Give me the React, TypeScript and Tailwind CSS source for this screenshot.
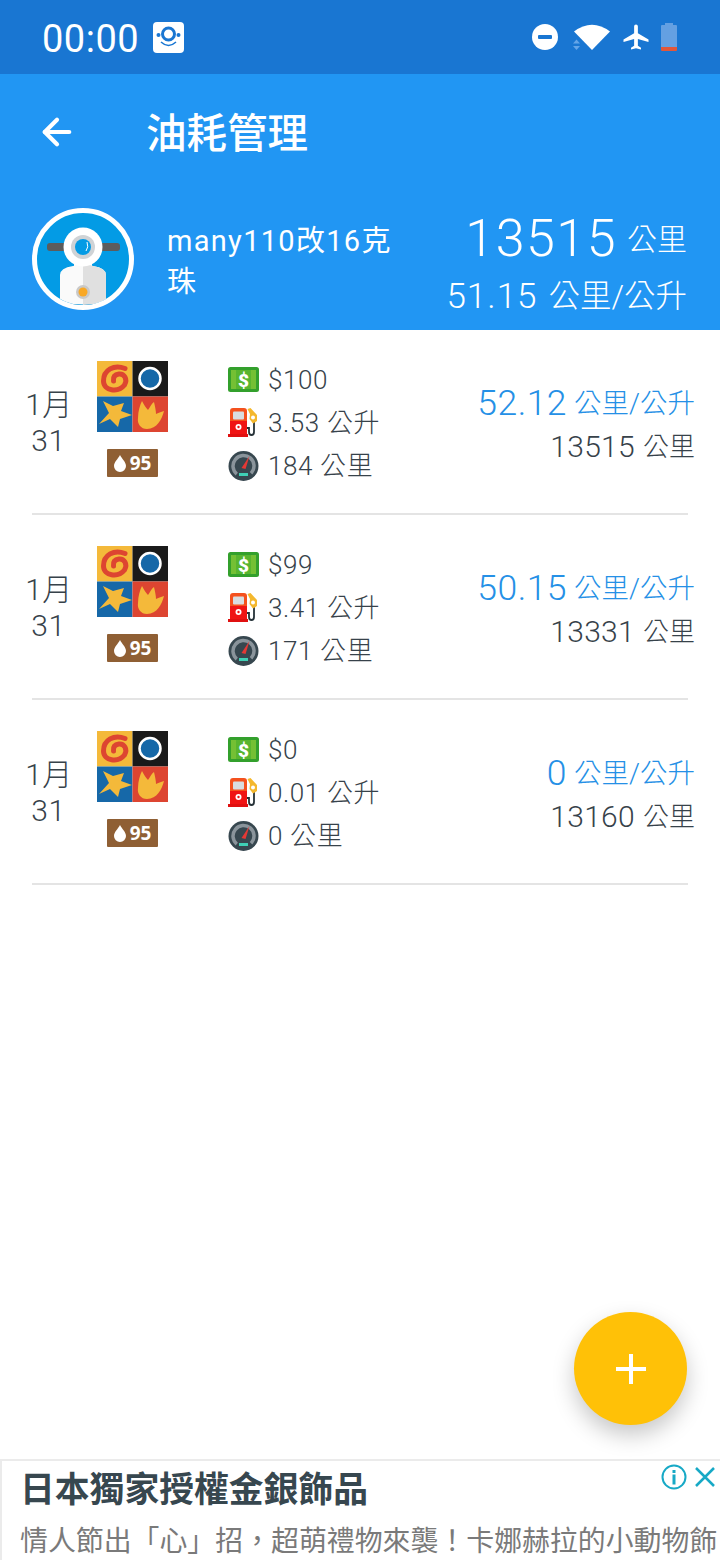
import { ArrowLeft } from 'lucide-react';

const FONT = '[font-family:Roboto,"Noto_Sans_CJK_TC",sans-serif]';

const records = [
  { money: '$100', litre: '3.53', dist: '184', rate: '52.12', odo: '13515' },
  { money: '$99', litre: '3.41', dist: '171', rate: '50.15', odo: '13331' },
  { money: '$0', litre: '0.01', dist: '0', rate: '0', odo: '13160' },
];

const StatusIcons = () => (
  <div className="flex items-center">
    <svg width="26" height="26" viewBox="0 0 26 26" className="mr-[15px]">
      <circle cx="13" cy="13" r="13" fill="#fff" />
      <rect x="6" y="11" width="14" height="4" rx="1" fill="#1976d2" />
    </svg>
    <svg width="38" height="28" viewBox="0 0 38 28" className="mr-[10px]">
      <path d="M1 8.500 Q19 -5 37 8.500 L19 27 Z" fill="#fff" />
      <path d="M0 20.500 L3.500 16.500 L7 20.500 Z M0 23 L7 23 L3.500 27 Z" fill="#64a5e8" />
    </svg>
    <svg width="30" height="30" viewBox="0 0 24 24" className="mr-[10px]">
      <path d="M22 16v-2l-8.500-5V3.500C13.500 2.670 12.830 2 12 2s-1.500.670-1.500 1.500V9L2 14v2l8.500-2.500V19L8 20.500V22l4-1 4 1v-1.500L13.500 19v-5.500L22 16z" fill="#fff" />
    </svg>
    <div className="flex h-[28px] w-[16px] flex-col">
      <div className="mx-auto h-[2px] w-[8px] bg-[#64a0e2]" />
      <div className="flex-1 rounded-t-[1px] bg-[#64a0e2]" />
      <div className="h-[4px] rounded-b-[1px] bg-[#e2573a]" />
    </div>
  </div>
);

const Scooter = () => (
  <div className="h-[102px] w-[102px] shrink-0 overflow-hidden rounded-full border-[5px] border-white bg-[#039be5]">
    <svg width="92" height="92" viewBox="0 0 92 92">
      <rect x="10" y="30" width="73" height="8" rx="3" fill="#5c5c5c" />
      <rect x="37" y="46" width="18" height="10" fill="#fafafa" />
      <path d="M23 89 V62 Q23 55 36 53 Q46 50 56 53 Q69 55 69 62 V89 Q46 94 23 89 Z" fill="#fafafa" />
      <path d="M46 51 Q52 51 56 53 Q69 55 69 62 V89 Q57 92 46 92 Z" fill="#e0e0e0" />
      <path d="M22 90 Q46 95 70 90" stroke="#0d7fb8" strokeWidth="1" fill="none" />
      <circle cx="46" cy="34" r="19.500" fill="#fff" />
      <circle cx="46" cy="34" r="12" fill="#cfd3d6" />
      <circle cx="46" cy="34" r="8" fill="#039be5" />
      <path d="M50 29 Q52 34 49 38" stroke="#fff" strokeWidth="1" fill="none" />
      <circle cx="46" cy="79" r="7" fill="#c9c9c9" />
      <circle cx="46" cy="79" r="4.500" fill="#f9a825" />
    </svg>
  </div>
);

const BrandLogo = () => (
  <svg width="71" height="71" viewBox="0 0 71 71">
    <rect width="35.500" height="35.500" fill="#f4b93a" />
    <rect x="35.500" width="35.500" height="35.500" fill="#1a1a1a" />
    <rect y="35.500" width="35.500" height="35.500" fill="#1668a8" />
    <rect x="35.500" y="35.500" width="35.500" height="35.500" fill="#dd4531" />
    <path d="M28 7.500 C17 3 6.500 9 6.500 20 C6.500 30 21 32 27.500 24 C31 18 27 12.500 22 13 C18 13.500 16 16 16.500 20" fill="none" stroke="#dd4531" strokeWidth="5" strokeLinecap="round" />
    <circle cx="53" cy="17.500" r="10.500" fill="#1668a8" stroke="#fff" strokeWidth="2.500" />
    <path d="M6 40 L16 45 L27 42 L24 50 L35 54 L23 58 L21 66 L13 58 L2 63 L12 52 Z" fill="#f4b93a" />
    <path d="M41 57 C41 50 43 44 45 40 C47 44 49 47 51 49 C53 46 55 42 57 41 C58 45 59 50 59 53 C61 52 64 51 67 50 C65 58 60 68 50 68 C44 68 40 63 41 57 Z" fill="#f4b93a" />
  </svg>
);

const OctaneBadge = () => (
  <div className="flex h-[28px] w-[51px] items-center justify-center gap-[4px] rounded-[1px] bg-[#8f5f34]">
    <svg width="12" height="17" viewBox="0 0 12 17">
      <path d="M6 0 C8 4 12 7 12 11 A6 6 0 0 1 0 11 C0 7 4 4 6 0 Z" fill="#fff" />
    </svg>
    <span className="text-[19px] leading-none font-bold text-white [font-family:'Open_Sans',sans-serif]">95</span>
  </div>
);

const MoneyIcon = () => (
  <svg width="31" height="26" viewBox="0 0 31 26">
    <rect width="31" height="25" rx="2.500" fill="#33a02c" />
    <rect x="3" y="3" width="25" height="19" fill="#74c034" />
    <rect x="8" y="3" width="15" height="19" fill="#58b52f" />
    <text x="15.500" y="19.500" textAnchor="middle" fontSize="19" fontWeight="900" fill="#fff" fontFamily="Roboto">$</text>
  </svg>
);

const PumpIcon = () => (
  <svg width="31" height="30" viewBox="0 0 31 30">
    <path d="M2 3 Q2 0 5 0 H16 Q19 0 19 3 V26 H2 Z" fill="#f4511e" />
    <rect x="5" y="3.500" width="11" height="8" rx="1" fill="#d9dde0" />
    <rect x="2" y="13" width="17" height="13" fill="#f01414" />
    <circle cx="10.500" cy="19" r="3" fill="#fff" />
    <circle cx="10.500" cy="19" r="1.200" fill="#f01414" />
    <rect y="26" width="20" height="3" fill="#e01010" />
    <path d="M19 20 H21 V24 Q21 27 23.500 27 Q26 27 26 24 V14" stroke="#263238" strokeWidth="1.800" fill="none" />
    <path d="M19.500 1 L22.500 0 L29 7 V13 L25 15.500 L21.500 11 L22 6 Z" fill="#f4b82e" />
    <circle cx="25" cy="9.500" r="2" fill="#fff" />
  </svg>
);

const GaugeIcon = () => (
  <svg width="31" height="30" viewBox="0 0 31 30">
    <circle cx="15.500" cy="15" r="15" fill="#37474f" />
    <circle cx="15.500" cy="15" r="10.500" fill="none" stroke="#8a949b" strokeWidth="3.500" strokeDasharray="50 16" transform="rotate(130 15.500 15)" />
    <path d="M13.500 17 L21.500 5 L17.500 18 Z" fill="#e53935" />
    <rect x="11" y="22" width="9" height="3" fill="#3fd0b5" />
    <path d="M2 26.500 Q15.500 34 29 26.500 V31 H2 Z" fill="#fff" />
  </svg>
);

const Stat = ({ icon, value, unit }: { icon: React.ReactNode; value: string; unit?: string }) => (
  <div className="flex h-[43px] items-center gap-[9px] text-[#37424a]">
    <div className="flex w-[31px] justify-center">{icon}</div>
    <span className="text-[26px] leading-none font-light tracking-[0.6px]">
      {value}
      {unit && <span className="ml-[7px]">{unit}</span>}
    </span>
  </div>
);

const RecordRow = ({ money, litre, dist, rate, odo }: (typeof records)[number]) => (
  <div className="mx-[32px] flex h-[185px] items-stretch border-b-2 border-[#e4e4e4]">
    <div className="ml-[-16px] flex w-[65px] flex-col items-center pt-[57px] text-[30px] leading-[36px] font-light tracking-[0.5px] text-[#37424a]">
      <span className="pl-[1px]">1月</span>
      <span>31</span>
    </div>
    <div className="ml-[16px] flex w-[71px] flex-col items-center pt-[31px]">
      <BrandLogo />
      <div className="mt-[17px]">
        <OctaneBadge />
      </div>
    </div>
    <div className="ml-[60px] flex flex-col pt-[28px]">
      <Stat icon={<MoneyIcon />} value={money} />
      <Stat icon={<PumpIcon />} value={litre} unit="公升" />
      <Stat icon={<GaugeIcon />} value={dist} unit="公里" />
    </div>
    <div className="mr-[-7px] flex flex-1 flex-col items-end pt-[52px] font-light">
      <div className="flex h-[43px] items-center gap-[7px] text-[#2590e6]">
        <span className="text-[35.5px] leading-[43px] tracking-[0.5px]">{rate}</span>
        <span className="text-[27.5px] leading-[43px]">公里/公升</span>
      </div>
      <div className="flex h-[44px] items-center gap-[8px] text-[#37424a]">
        <span className="text-[30px] leading-[44px] tracking-[0.3px]">{odo}</span>
        <span className="text-[26px] leading-[44px]">公里</span>
      </div>
    </div>
  </div>
);

export default function App() {
  return (
    <div className={`relative flex h-[1560px] w-[720px] flex-col overflow-hidden bg-white ${FONT}`}>
      <div className="flex h-[74px] shrink-0 items-center justify-between bg-[#1976d2] pr-[43px] pl-[42px]">
        <div className="flex items-center gap-[14px]">
          <span className="pt-[3px] text-[38px] leading-none tracking-[0.5px] text-white">00:00</span>
          <svg width="31" height="31" viewBox="0 0 31 31">
            <rect width="31" height="31" rx="4" fill="#fff" />
            <circle cx="15.500" cy="12" r="6" fill="none" stroke="#1976d2" strokeWidth="3" />
            <circle cx="5.500" cy="13" r="2" fill="#1976d2" />
            <circle cx="25.500" cy="13" r="2" fill="#1976d2" />
            <path d="M8 20 Q15.500 27 23 20" fill="none" stroke="#1976d2" strokeWidth="1.500" />
          </svg>
        </div>
        <StatusIcons />
      </div>

      <div className="h-[256px] shrink-0 bg-[#2196f3] text-white">
        <div className="flex h-[116px] items-center pl-[36px]">
          <ArrowLeft size={42} strokeWidth={2.4} className="shrink-0" />
          <h1 className="ml-[68px] pt-[4px] text-[40.5px] leading-none font-medium">油耗管理</h1>
        </div>
        <div className="flex items-start pt-[18px] pl-[32px]">
          <Scooter />
          <div className="ml-[33px] w-[235px] pt-[13px] text-[29px] leading-[41px] tracking-[1.3px]">many110改16克珠</div>
          <div className="flex flex-1 flex-col items-end pt-[1px] pr-[33px] font-light">
            <div className="flex h-[59px] items-center gap-[10px]">
              <span className="text-[52px] leading-[59px] tracking-[1.5px]">13515</span>
              <span className="pt-[2px] text-[30px] leading-[40px]">公里</span>
            </div>
            <div className="mt-[9px] flex items-center gap-[11px]">
              <span className="text-[35px] leading-[40px] tracking-[1px]">51.15</span>
              <span className="text-[31.5px] leading-[40px]">公里/公升</span>
            </div>
          </div>
        </div>
      </div>

      <div className="flex-1">
        {records.map((r) => (
          <RecordRow key={r.rate} {...r} />
        ))}
      </div>

      <button className="absolute top-[1312px] left-[574px] flex h-[113px] w-[113px] items-center justify-center rounded-full bg-[#ffc107] shadow-[0_10px_22px_rgba(0,0,0,0.22)]">
        <svg width="30" height="30" viewBox="0 0 30 30">
          <path d="M13 0 H17 V13 H30 V17 H17 V30 H13 V17 H0 V13 H13 Z" fill="#fff" />
        </svg>
      </button>

      <div className="relative h-[101px] shrink-0 overflow-hidden border-t-2 border-l-2 border-[#ebebeb] bg-white pl-[18px] [font-family:'Noto_Sans_CJK_TC',sans-serif]">
        <div className="mt-[6px] text-[34.8px] leading-[40px] font-bold text-[#37474f]">日本獨家授權金銀飾品</div>
        <div className="mt-[14px] text-[27.9px] leading-[36px] whitespace-nowrap text-[#7a7a7a]">{'情人節出「心」招\uFF0C超萌禮物來襲\uFF01卡娜赫拉的小動物飾'}</div>
        <svg width="26" height="26" viewBox="0 0 26 26" className="absolute top-[3px] right-[33px]">
          <circle cx="13" cy="13" r="11.500" fill="none" stroke="#17a9c6" strokeWidth="2" />
          <rect x="11.500" y="10.500" width="3" height="10" fill="#17a9c6" />
          <rect x="11.500" y="6" width="3" height="3" fill="#17a9c6" />
        </svg>
        <svg width="22" height="22" viewBox="0 0 22 22" className="absolute top-[5px] right-[4px]">
          <path d="M2 2 L20 20 M20 2 L2 20" stroke="#17a9c6" strokeWidth="2.500" />
        </svg>
      </div>
    </div>
  );
}
